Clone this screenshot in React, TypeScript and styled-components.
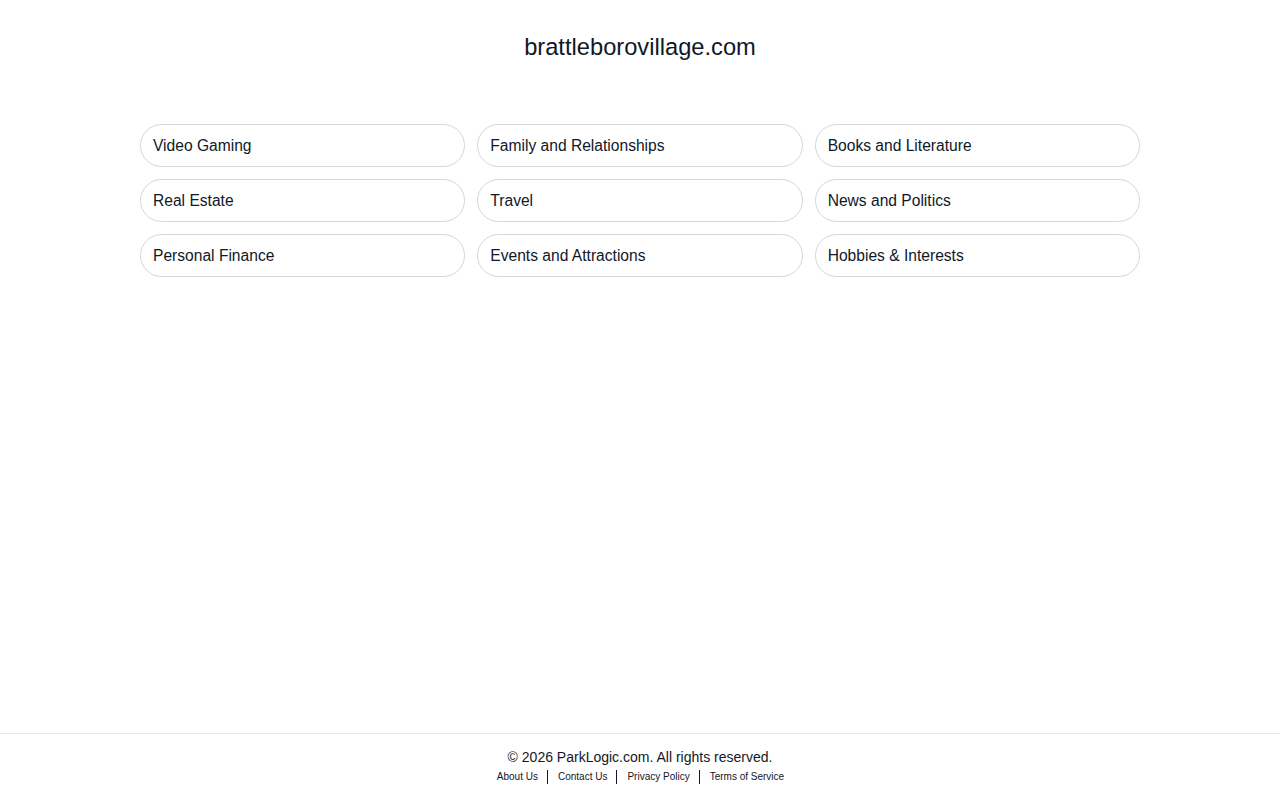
import styled, { createGlobalStyle } from "styled-components";

const GlobalStyle = createGlobalStyle`
  html, body {
    margin: 0;
    padding: 0;
    background: #ffffff;
    font-family: "Liberation Sans", Arial, sans-serif;
    color: #111827;
  }
`;

const Page = styled.div`
  min-height: 100vh;
  display: flex;
  flex-direction: column;
`;

const Main = styled.main`
  flex: 1;
  width: 1000px;
  margin: 0 auto;
`;

const Title = styled.h1`
  margin: 32px 0 0;
  font-size: 23.7px;
  line-height: 30px;
  font-weight: 400;
  text-align: center;
  color: #111827;
`;

const Grid = styled.div`
  margin-top: 62px;
  display: grid;
  grid-template-columns: repeat(3, 1fr);
  gap: 12px;
`;

const Pill = styled.a`
  display: flex;
  align-items: center;
  height: 43px;
  box-sizing: border-box;
  padding: 0 12px;
  border: 1px solid #d4d6dc;
  border-radius: 22px;
  font-size: 15.6px;
  color: #111827;
  text-decoration: none;
  cursor: pointer;
`;

const Footer = styled.footer`
  border-top: 1px solid #e5e7eb;
  padding: 13px 0 16px;
  text-align: center;
`;

const Copy = styled.div`
  font-size: 14px;
  line-height: 20px;
  color: #111827;
`;

const Links = styled.nav`
  display: flex;
  justify-content: center;
  align-items: center;
  margin-top: 3px;
`;

const FootLink = styled.a<{ $first?: boolean }>`
  font-size: 10px;
  line-height: 14px;
  color: #111827;
  text-decoration: none;
  padding: 0 9px 0 10px;
  border-left: ${(p) => (p.$first ? "none" : "1px solid #111827")};
`;

const topics = [
  "Video Gaming",
  "Family and Relationships",
  "Books and Literature",
  "Real Estate",
  "Travel",
  "News and Politics",
  "Personal Finance",
  "Events and Attractions",
  "Hobbies & Interests",
];

const footerLinks = ["About Us", "Contact Us", "Privacy Policy", "Terms of Service"];

export default function App() {
  return (
    <Page>
      <GlobalStyle />
      <Main>
        <Title>brattleborovillage.com</Title>
        <Grid>
          {topics.map((t) => (
            <Pill key={t}>{t}</Pill>
          ))}
        </Grid>
      </Main>
      <Footer>
        <Copy>© 2026 ParkLogic.com. All rights reserved.</Copy>
        <Links>
          {footerLinks.map((l, i) => (
            <FootLink key={l} $first={i === 0}>
              {l}
            </FootLink>
          ))}
        </Links>
      </Footer>
    </Page>
  );
}
